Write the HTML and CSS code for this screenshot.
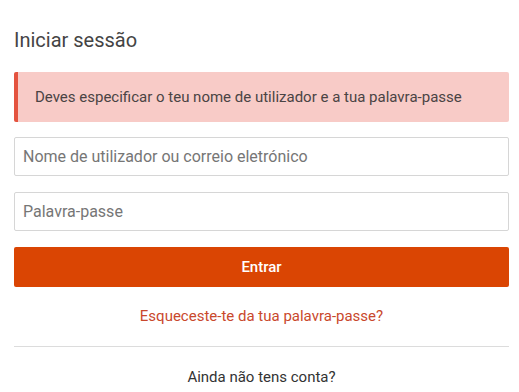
FILE: index.html
```html
<!DOCTYPE html>
<html lang="pt">
<head>
<meta charset="utf-8">
<link rel="stylesheet" href="styles.css">
</head>
<body>
<main class="login">
  <h1 class="title">Iniciar sessão</h1>
  <div class="alert">Deves especificar o teu nome de utilizador e a tua palavra-passe</div>
  <form class="form">
    <input class="field" type="text" placeholder="Nome de utilizador ou correio eletrónico">
    <input class="field" type="password" placeholder="Palavra-passe">
    <button class="submit" type="button">Entrar</button>
  </form>
  <a class="forgot" href="#">Esqueceste-te da tua palavra-passe?</a>
  <hr class="divider">
  <p class="signup">Ainda não tens conta?</p>
</main>
</body>
</html>
```
FILE: styles.css
```css
* { box-sizing: border-box; }
html, body { margin: 0; background: #fff; }
body { font-family: Roboto, "Noto Sans", sans-serif; color: #444; }
.login { padding: 26px 10px 0 14px; display: flex; flex-direction: column; }
.title { margin: 0; font-size: 20px; font-weight: 400; color: #444; line-height: 28px; }
.alert {
  margin-top: 18px;
  height: 50px;
  display: flex; align-items: center;
  padding-left: 17px;
  background: #f8cbc7;
  border-left: 4px solid #e4533f;
  border-radius: 2px;
  font-size: 15px; color: #4a4444;
}
.form { display: flex; flex-direction: column; gap: 16px; margin-top: 15px; }
.field {
  height: 39px;
  border: 1px solid #d6d6d6;
  border-radius: 2px;
  padding: 0 8px;
  font-family: inherit; font-size: 16px; color: #444;
  outline: none;
}
.field::placeholder { color: #767676; }
.submit {
  height: 40px;
  border: none; border-radius: 2px;
  background: #da4503;
  color: #fff;
  font-family: inherit; font-size: 15px; font-weight: 500;
}
.forgot {
  margin-top: 20px;
  align-self: center;
  font-size: 15px; color: #c9482c; text-decoration: none; line-height: 18px;
}
.divider { width: 100%; margin: 21px 0 0; border: 0; border-top: 1px solid #dcdcdc; }
.signup { margin: 21px 0 0; text-align: center; font-size: 15px; color: #333; line-height: 18px; }
```
